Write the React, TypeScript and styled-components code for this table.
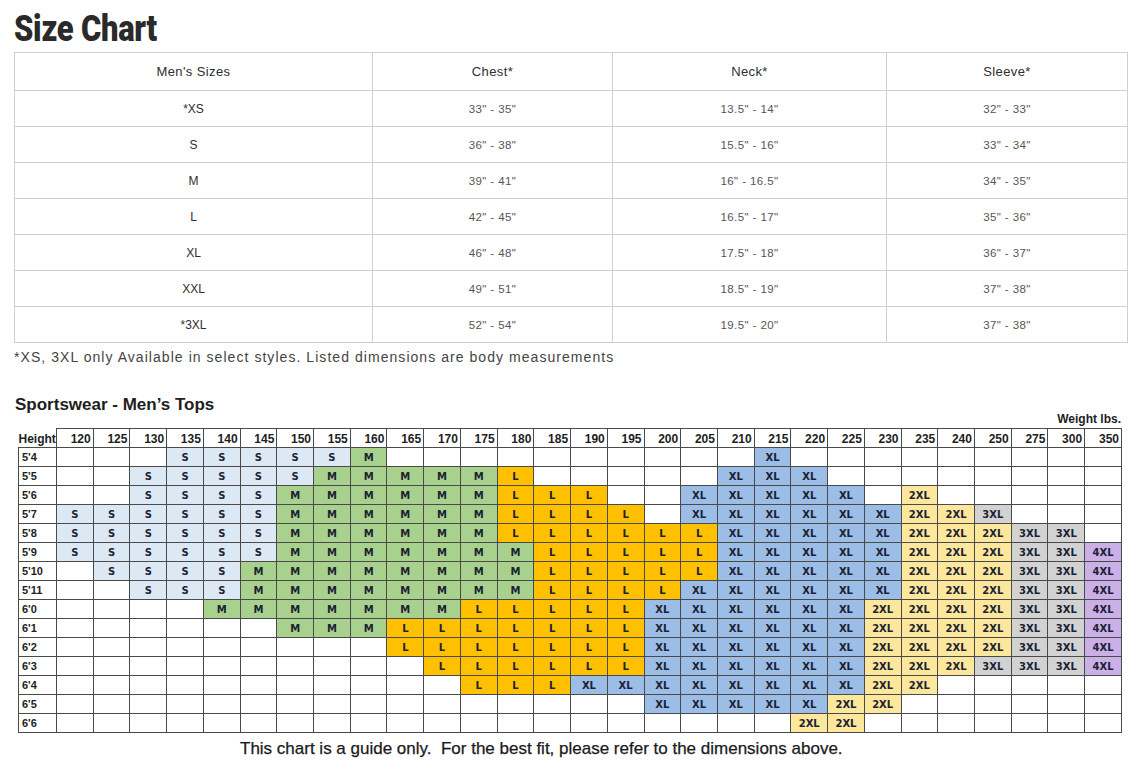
import React from 'react';
import styled, { createGlobalStyle } from 'styled-components';

const GlobalStyle = createGlobalStyle`
  html, body { margin: 0; padding: 0; background: #ffffff; }
  body { font-family: "Liberation Sans", Arial, sans-serif; color: #333; }
`;

const Page = styled.div`
  width: 1136px;
  box-sizing: border-box;
  padding: 0 9px 0 14px;
`;

const Title = styled.h1`
  margin: 0;
  height: 52px;
  box-sizing: border-box;
  padding-top: 11px;
  font-family: Roboto, "Liberation Sans", sans-serif;
  font-weight: 900;
  font-size: 36px;
  line-height: 36px;
  color: #2a2a2a;
`;

const TitleText = styled.span`
  display: inline-block;
  transform: scaleX(0.86);
  transform-origin: left center;
  letter-spacing: -0.3px;
`;

const SizeTable = styled.table`
  width: 1113px;
  border-collapse: collapse;
  table-layout: fixed;
`;

const HeadCell = styled.th`
  height: 37px;
  padding: 0;
  border: 1px solid #cfcfcf;
  font-weight: normal;
  font-size: 13px;
  letter-spacing: 0.4px;
  color: #2e2e2e;
  text-align: center;
`;

const Cell = styled.td<{ $label?: boolean }>`
  height: 35px;
  padding: 0;
  border: 1px solid #cfcfcf;
  text-align: center;
  font-size: ${(p) => (p.$label ? '12px' : '11.5px')};
  letter-spacing: ${(p) => (p.$label ? '0' : '0.4px')};
  color: ${(p) => (p.$label ? '#2e2e2e' : '#555')};
`;

const Note = styled.p`
  margin: 6px 0 0;
  font-size: 14px;
  letter-spacing: 1.05px;
  color: #444;
  line-height: 16px;
`;

const SubTitle = styled.h2`
  margin: 30px 0 0 1px;
  font-size: 17px;
  font-weight: bold;
  color: #1e1e1e;
  line-height: 20px;
`;

const WeightLabel = styled.div`
  width: 1107px;
  text-align: right;
  font-size: 12px;
  font-weight: bold;
  color: #1e1e1e;
  line-height: 14px;
  margin-top: -3px;
`;

const Chart = styled.table`
  margin: 2px 0 0 4px;
  width: 1104px;
  border-collapse: collapse;
  table-layout: fixed;
`;

const WeightHead = styled.th`
  height: 18px;
  padding: 0 2px 0 0;
  border: 1px solid #4a4a4a;
  text-align: right;
  vertical-align: bottom;
  font-size: 12px;
  font-weight: bold;
  color: #1e1e1e;
  line-height: 15px;
`;

const HeightHead = styled(WeightHead)`
  border-top: none;
  border-left: none;
  text-align: left;
  padding: 0;
`;

const RowLabel = styled.th`
  height: 18px;
  padding: 0 0 0 3px;
  border: 1px solid #4a4a4a;
  text-align: left;
  font-size: 11px;
  font-weight: bold;
  color: #1e1e1e;
`;

const SIZE_COLORS: Record<string, string> = {
  '': '#ffffff',
  S: '#dce9f5',
  M: '#a9d18e',
  L: '#ffc000',
  XL: '#9cbde5',
  '2XL': '#fde79c',
  '3XL': '#d2d2d2',
  '4XL': '#cbb0e8',
};

const SizeCell = styled.td<{ $size: string }>`
  height: 18px;
  padding: 0;
  border: 1px solid #4a4a4a;
  background: ${(p) => SIZE_COLORS[p.$size]};
  text-align: center;
  font-family: "DejaVu Sans", Verdana, sans-serif;
  font-size: 10px;
  font-weight: bold;
  color: #1b2233;
`;

const Footer = styled.p`
  margin: 6px 0 0;
  padding-left: 226px;
  white-space: pre;
  font-size: 17px;
  color: #1a1a1a;
  line-height: 20px;
  -webkit-text-stroke: 0.25px #1a1a1a;
`;

const sizeRows = [
  ['*XS', '33" - 35"', '13.5" - 14"', '32" - 33"'],
  ['S', '36" - 38"', '15.5" - 16"', '33" - 34"'],
  ['M', '39" - 41"', '16" - 16.5"', '34" - 35"'],
  ['L', '42" - 45"', '16.5" - 17"', '35" - 36"'],
  ['XL', '46" - 48"', '17.5" - 18"', '36" - 37"'],
  ['XXL', '49" - 51"', '18.5" - 19"', '37" - 38"'],
  ['*3XL', '52" - 54"', '19.5" - 20"', '37" - 38"'],
];

const weights = [120, 125, 130, 135, 140, 145, 150, 155, 160, 165, 170, 175, 180, 185, 190, 195, 200, 205, 210, 215, 220, 225, 230, 235, 240, 250, 275, 300, 350];

type Run = [string, number];
const chartRows: [string, Run[]][] = [
  ["5'4", [['', 3], ['S', 5], ['M', 1], ['', 10], ['XL', 1], ['', 9]]],
  ["5'5", [['', 2], ['S', 5], ['M', 5], ['L', 1], ['', 5], ['XL', 3], ['', 8]]],
  ["5'6", [['', 2], ['S', 4], ['M', 6], ['L', 3], ['', 2], ['XL', 5], ['', 1], ['2XL', 1], ['', 5]]],
  ["5'7", [['S', 6], ['M', 6], ['L', 4], ['', 1], ['XL', 6], ['2XL', 2], ['3XL', 1], ['', 3]]],
  ["5'8", [['S', 6], ['M', 6], ['L', 6], ['XL', 5], ['2XL', 3], ['3XL', 2], ['', 1]]],
  ["5'9", [['S', 6], ['M', 7], ['L', 5], ['XL', 5], ['2XL', 3], ['3XL', 2], ['4XL', 1]]],
  ["5'10", [['', 1], ['S', 4], ['M', 8], ['L', 5], ['XL', 5], ['2XL', 3], ['3XL', 2], ['4XL', 1]]],
  ["5'11", [['', 2], ['S', 3], ['M', 8], ['L', 4], ['XL', 6], ['2XL', 3], ['3XL', 2], ['4XL', 1]]],
  ["6'0", [['', 4], ['M', 7], ['L', 5], ['XL', 6], ['2XL', 4], ['3XL', 2], ['4XL', 1]]],
  ["6'1", [['', 6], ['M', 3], ['L', 7], ['XL', 6], ['2XL', 4], ['3XL', 2], ['4XL', 1]]],
  ["6'2", [['', 9], ['L', 7], ['XL', 6], ['2XL', 4], ['3XL', 2], ['4XL', 1]]],
  ["6'3", [['', 10], ['L', 6], ['XL', 6], ['2XL', 3], ['3XL', 3], ['4XL', 1]]],
  ["6'4", [['', 11], ['L', 3], ['XL', 8], ['2XL', 2], ['', 5]]],
  ["6'5", [['', 16], ['XL', 5], ['2XL', 2], ['', 6]]],
  ["6'6", [['', 20], ['2XL', 2], ['', 7]]],
];

const expand = (runs: Run[]) => runs.flatMap(([s, n]) => Array.from({ length: n }, () => s));

export default function App() {
  return (
    <Page>
      <GlobalStyle />
      <Title>
        <TitleText>Size Chart</TitleText>
      </Title>
      <SizeTable>
        <colgroup>
          <col style={{ width: 358 }} />
          <col style={{ width: 240 }} />
          <col style={{ width: 274 }} />
          <col style={{ width: 241 }} />
        </colgroup>
        <thead>
          <tr>
            <HeadCell>Men's Sizes</HeadCell>
            <HeadCell>Chest*</HeadCell>
            <HeadCell>Neck*</HeadCell>
            <HeadCell>Sleeve*</HeadCell>
          </tr>
        </thead>
        <tbody>
          {sizeRows.map((r) => (
            <tr key={r[0]}>
              <Cell $label>{r[0]}</Cell>
              <Cell>{r[1]}</Cell>
              <Cell>{r[2]}</Cell>
              <Cell>{r[3]}</Cell>
            </tr>
          ))}
        </tbody>
      </SizeTable>
      <Note>*XS, 3XL only Available in select styles. Listed dimensions are body measurements</Note>

      <SubTitle>Sportswear - Men’s Tops</SubTitle>
      <WeightLabel>Weight lbs.</WeightLabel>
      <Chart>
        <colgroup>
          <col style={{ width: 38 }} />
        </colgroup>
        <thead>
          <tr>
            <HeightHead>Height</HeightHead>
            {weights.map((w) => (
              <WeightHead key={w}>{w}</WeightHead>
            ))}
          </tr>
        </thead>
        <tbody>
          {chartRows.map(([h, runs]) => (
            <tr key={h}>
              <RowLabel>{h}</RowLabel>
              {expand(runs).map((s, i) => (
                <SizeCell key={i} $size={s}>{s}</SizeCell>
              ))}
            </tr>
          ))}
        </tbody>
      </Chart>
      <Footer>This chart is a guide only.  For the best fit, please refer to the dimensions above.</Footer>
    </Page>
  );
}
